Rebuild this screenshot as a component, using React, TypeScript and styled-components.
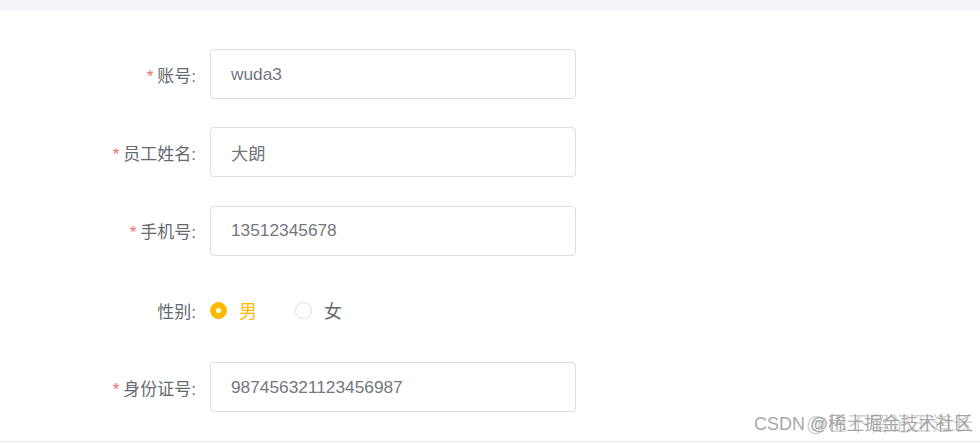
import styled, { createGlobalStyle } from "styled-components";

const GlobalStyle = createGlobalStyle`
  html, body {
    margin: 0;
    padding: 0;
    background: #ffffff;
  }
  body {
    font-family: "Liberation Sans", "Noto Sans CJK SC", sans-serif;
  }
`;

type Field = {
  label: string;
  value: string;
  required?: boolean;
};

const fields: Field[] = [
  { label: "账号", value: "wuda3", required: true },
  { label: "员工姓名", value: "大朗", required: true },
  { label: "手机号", value: "13512345678", required: true }
];

export default function App() {
  return (
    <Page>
      <GlobalStyle />
      <TopBand />
      <Form>
        {fields.map((f) => (
          <Row key={f.label}>
            <Label>
              {f.required && <Star>*</Star>}
              {f.label}:
            </Label>
            <Input defaultValue={f.value} />
          </Row>
        ))}
        <Row>
          <Label $shift>性别:</Label>
          <RadioGroup>
            <RadioItem $checked>
              <Dot $checked />男
            </RadioItem>
            <RadioItem>
              <Dot />女
            </RadioItem>
          </RadioGroup>
        </Row>
        <Row>
          <Label>
            <Star>*</Star>身份证号:
          </Label>
          <Input defaultValue="987456321123456987" />
        </Row>
      </Form>
      <Footer />
      <Watermark>
        <span>CSDN @稀土掘金技术社区</span>
        <Ghost>@巴不留记王道长</Ghost>
      </Watermark>
    </Page>
  );
}

const Page = styled.div`
  position: relative;
  width: 980px;
  height: 444px;
  overflow: hidden;
  background: #fff;
`;

const TopBand = styled.div`
  height: 10px;
  background: #f3f4f8;
`;

const Form = styled.div`
  display: flex;
  flex-direction: column;
  gap: 28.3px;
  padding: 39px 0 0 46px;
`;

const Row = styled.div`
  display: flex;
  align-items: center;
  height: 50px;
`;

const Label = styled.label<{ $shift?: boolean }>`
  width: 150px;
  padding-right: 14px;
  margin-top: ${(p) => (p.$shift ? "3px" : "0")};
  text-align: right;
  font-size: 17px;
  color: #666a70;
`;

const Star = styled.span`
  color: #f56c6c;
  margin-right: 4px;
`;

const Input = styled.input`
  box-sizing: border-box;
  width: 366px;
  height: 50px;
  padding: 0 20px;
  border: 1px solid #dcdfe6;
  border-radius: 4px;
  font-family: "Liberation Sans", "Noto Sans CJK SC", sans-serif;
  font-size: 17.3px;
  color: #74777e;
  outline: none;
  background: #fff;
`;

const RadioGroup = styled.div`
  display: flex;
  align-items: center;
  gap: 38px;
  margin-top: 3px;
`;

const RadioItem = styled.span<{ $checked?: boolean }>`
  display: flex;
  align-items: center;
  gap: 12px;
  font-size: 18px;
  color: ${(p) => (p.$checked ? "#ffba00" : "#666a70")};
`;

const Dot = styled.span<{ $checked?: boolean }>`
  box-sizing: border-box;
  width: 17px;
  height: 17px;
  border-radius: 50%;
  border: 1px solid ${(p) => (p.$checked ? "#ffba00" : "#dcdfe6")};
  background: ${(p) => (p.$checked ? "#ffba00" : "#fff")};
  display: flex;
  align-items: center;
  justify-content: center;
  &::after {
    content: "";
    width: 5px;
    height: 5px;
    border-radius: 50%;
    background: #fff;
    display: ${(p) => (p.$checked ? "block" : "none")};
  }
`;

const Footer = styled.div`
  margin-top: 29px;
  border-top: 1px solid #e9e9ec;
  height: 4px;
`;

const Watermark = styled.div`
  position: absolute;
  left: 754px;
  top: 409px;
  font-size: 18px;
  color: #a9a9a9;
  white-space: nowrap;
`;

const Ghost = styled.span`
  position: absolute;
  left: 52px;
  top: -1px;
  font-size: 20px;
  letter-spacing: 1px;
  color: #9a9a9a;
  opacity: 0.45;
`;
